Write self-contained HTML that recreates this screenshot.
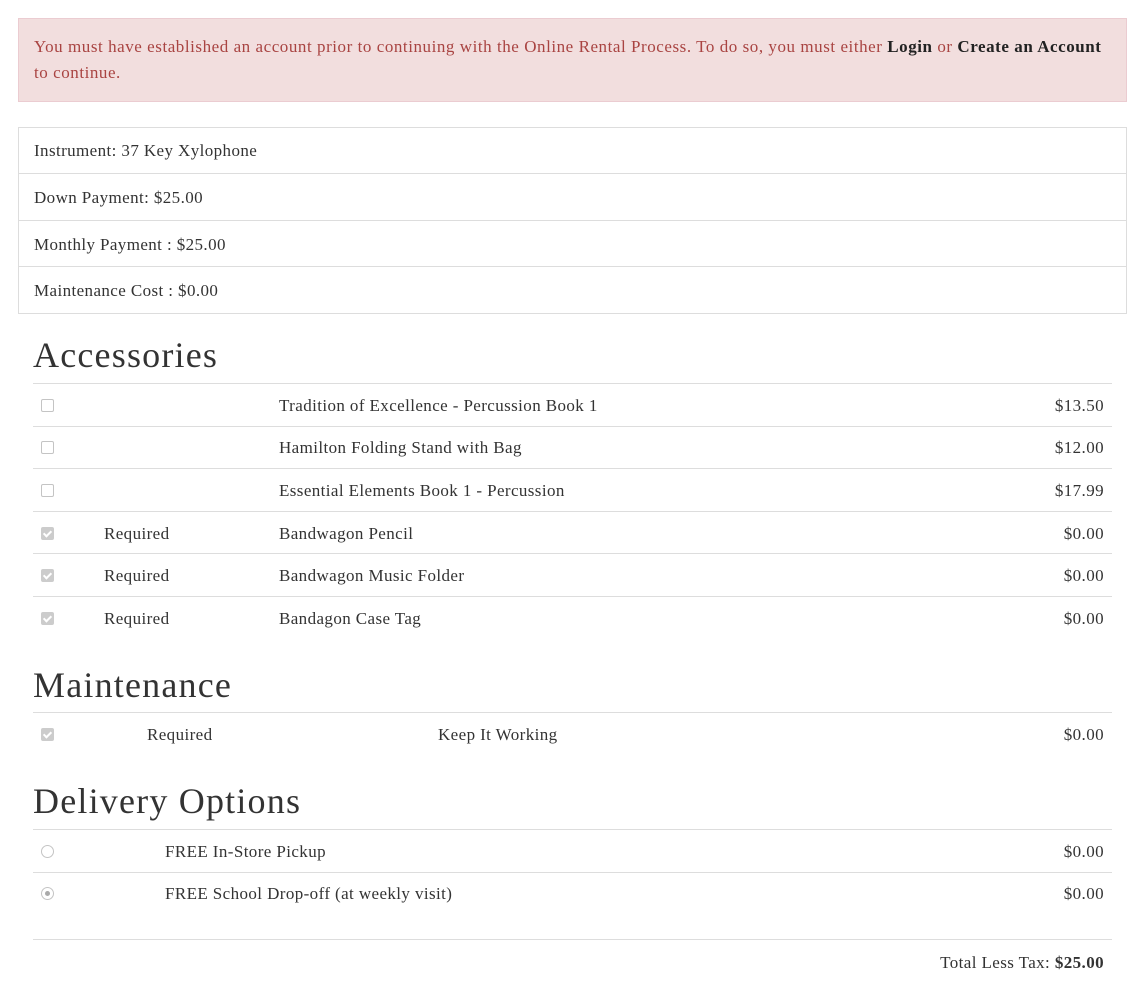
<!DOCTYPE html>
<html><head><meta charset="utf-8"><style>
body{margin:0;width:1139px;height:996px;background:#fff;font-family:"Liberation Serif",serif;color:#333;font-size:17px;letter-spacing:0.4px;position:relative;overflow:hidden}
.a{position:absolute}
.t{position:absolute;line-height:20px;white-space:nowrap}
.hl{position:absolute;left:33px;width:1079px;height:1px;background:#ddd}
.h{position:absolute;left:33px;font-size:36px;line-height:40px;letter-spacing:1.2px}
.cb{position:absolute;left:41px;width:11px;height:11px;border:1px solid #c4c4c4;border-radius:2px;background:#fff}
.cb.c{background:#ccc;border-color:#ccc}
.cb.c:after{content:"";position:absolute;left:3px;top:1px;width:3px;height:6px;border:solid #fff;border-width:0 2px 2px 0;transform:rotate(45deg)}
.rd{position:absolute;left:41px;width:11px;height:11px;border:1px solid #c4c4c4;border-radius:50%}
.rd.c:after{content:"";position:absolute;left:3px;top:3px;width:5px;height:5px;border-radius:50%;background:#aaa}
.r{right:35px;text-align:right}
</style></head><body>
<div class="a" style="left:18px;top:18px;width:1107px;height:82px;background:#f2dede;border:1px solid #ebccd1"></div>
<div class="t" style="left:34px;top:37px;color:#a94442;letter-spacing:0.55px">You must have established an account prior to continuing with the Online Rental Process. To do so, you must either <b style="color:#222">Login</b> or <b style="color:#222">Create an Account</b></div>
<div class="t" style="left:34px;top:63px;color:#a94442;letter-spacing:0.55px">to continue.</div>

<div class="a" style="left:18px;top:127px;width:1107px;height:185px;border:1px solid #ddd"></div>
<div class="a" style="left:19px;top:173px;width:1107px;height:1px;background:#ddd"></div>
<div class="a" style="left:19px;top:220px;width:1107px;height:1px;background:#ddd"></div>
<div class="a" style="left:19px;top:266px;width:1107px;height:1px;background:#ddd"></div>
<div class="t" style="left:34px;top:141px">Instrument: 37 Key Xylophone</div>
<div class="t" style="left:34px;top:188px">Down Payment: $25.00</div>
<div class="t" style="left:34px;top:235px">Monthly Payment : $25.00</div>
<div class="t" style="left:34px;top:281px">Maintenance Cost : $0.00</div>

<div class="h" style="top:335px">Accessories</div>
<div class="hl" style="top:383px"></div>
<div class="hl" style="top:426px"></div>
<div class="hl" style="top:468px"></div>
<div class="hl" style="top:511px"></div>
<div class="hl" style="top:553px"></div>
<div class="hl" style="top:596px"></div>

<div class="cb" style="top:399px"></div><div class="t" style="left:279px;top:396px">Tradition of Excellence - Percussion Book 1</div><div class="t r" style="top:396px">$13.50</div>
<div class="cb" style="top:441px"></div><div class="t" style="left:279px;top:438px">Hamilton Folding Stand with Bag</div><div class="t r" style="top:438px">$12.00</div>
<div class="cb" style="top:484px"></div><div class="t" style="left:279px;top:481px">Essential Elements Book 1 - Percussion</div><div class="t r" style="top:481px">$17.99</div>
<div class="cb c" style="top:527px"></div><div class="t" style="left:104px;top:524px">Required</div><div class="t" style="left:279px;top:524px">Bandwagon Pencil</div><div class="t r" style="top:524px">$0.00</div>
<div class="cb c" style="top:569px"></div><div class="t" style="left:104px;top:566px">Required</div><div class="t" style="left:279px;top:566px">Bandwagon Music Folder</div><div class="t r" style="top:566px">$0.00</div>
<div class="cb c" style="top:612px"></div><div class="t" style="left:104px;top:609px">Required</div><div class="t" style="left:279px;top:609px">Bandagon Case Tag</div><div class="t r" style="top:609px">$0.00</div>

<div class="h" style="top:665px">Maintenance</div>
<div class="hl" style="top:712px"></div>
<div class="cb c" style="top:728px"></div><div class="t" style="left:147px;top:725px">Required</div><div class="t" style="left:438px;top:725px">Keep It Working</div><div class="t r" style="top:725px">$0.00</div>

<div class="h" style="top:781px">Delivery Options</div>
<div class="hl" style="top:829px"></div>
<div class="hl" style="top:872px"></div>
<div class="rd" style="top:845px"></div><div class="t" style="left:165px;top:842px">FREE In-Store Pickup</div><div class="t r" style="top:842px">$0.00</div>
<div class="rd c" style="top:887px"></div><div class="t" style="left:165px;top:884px">FREE School Drop-off (at weekly visit)</div><div class="t r" style="top:884px">$0.00</div>

<div class="hl" style="top:939px"></div>
<div class="t r" style="top:953px">Total Less Tax: <b>$25.00</b></div>
</body></html>
